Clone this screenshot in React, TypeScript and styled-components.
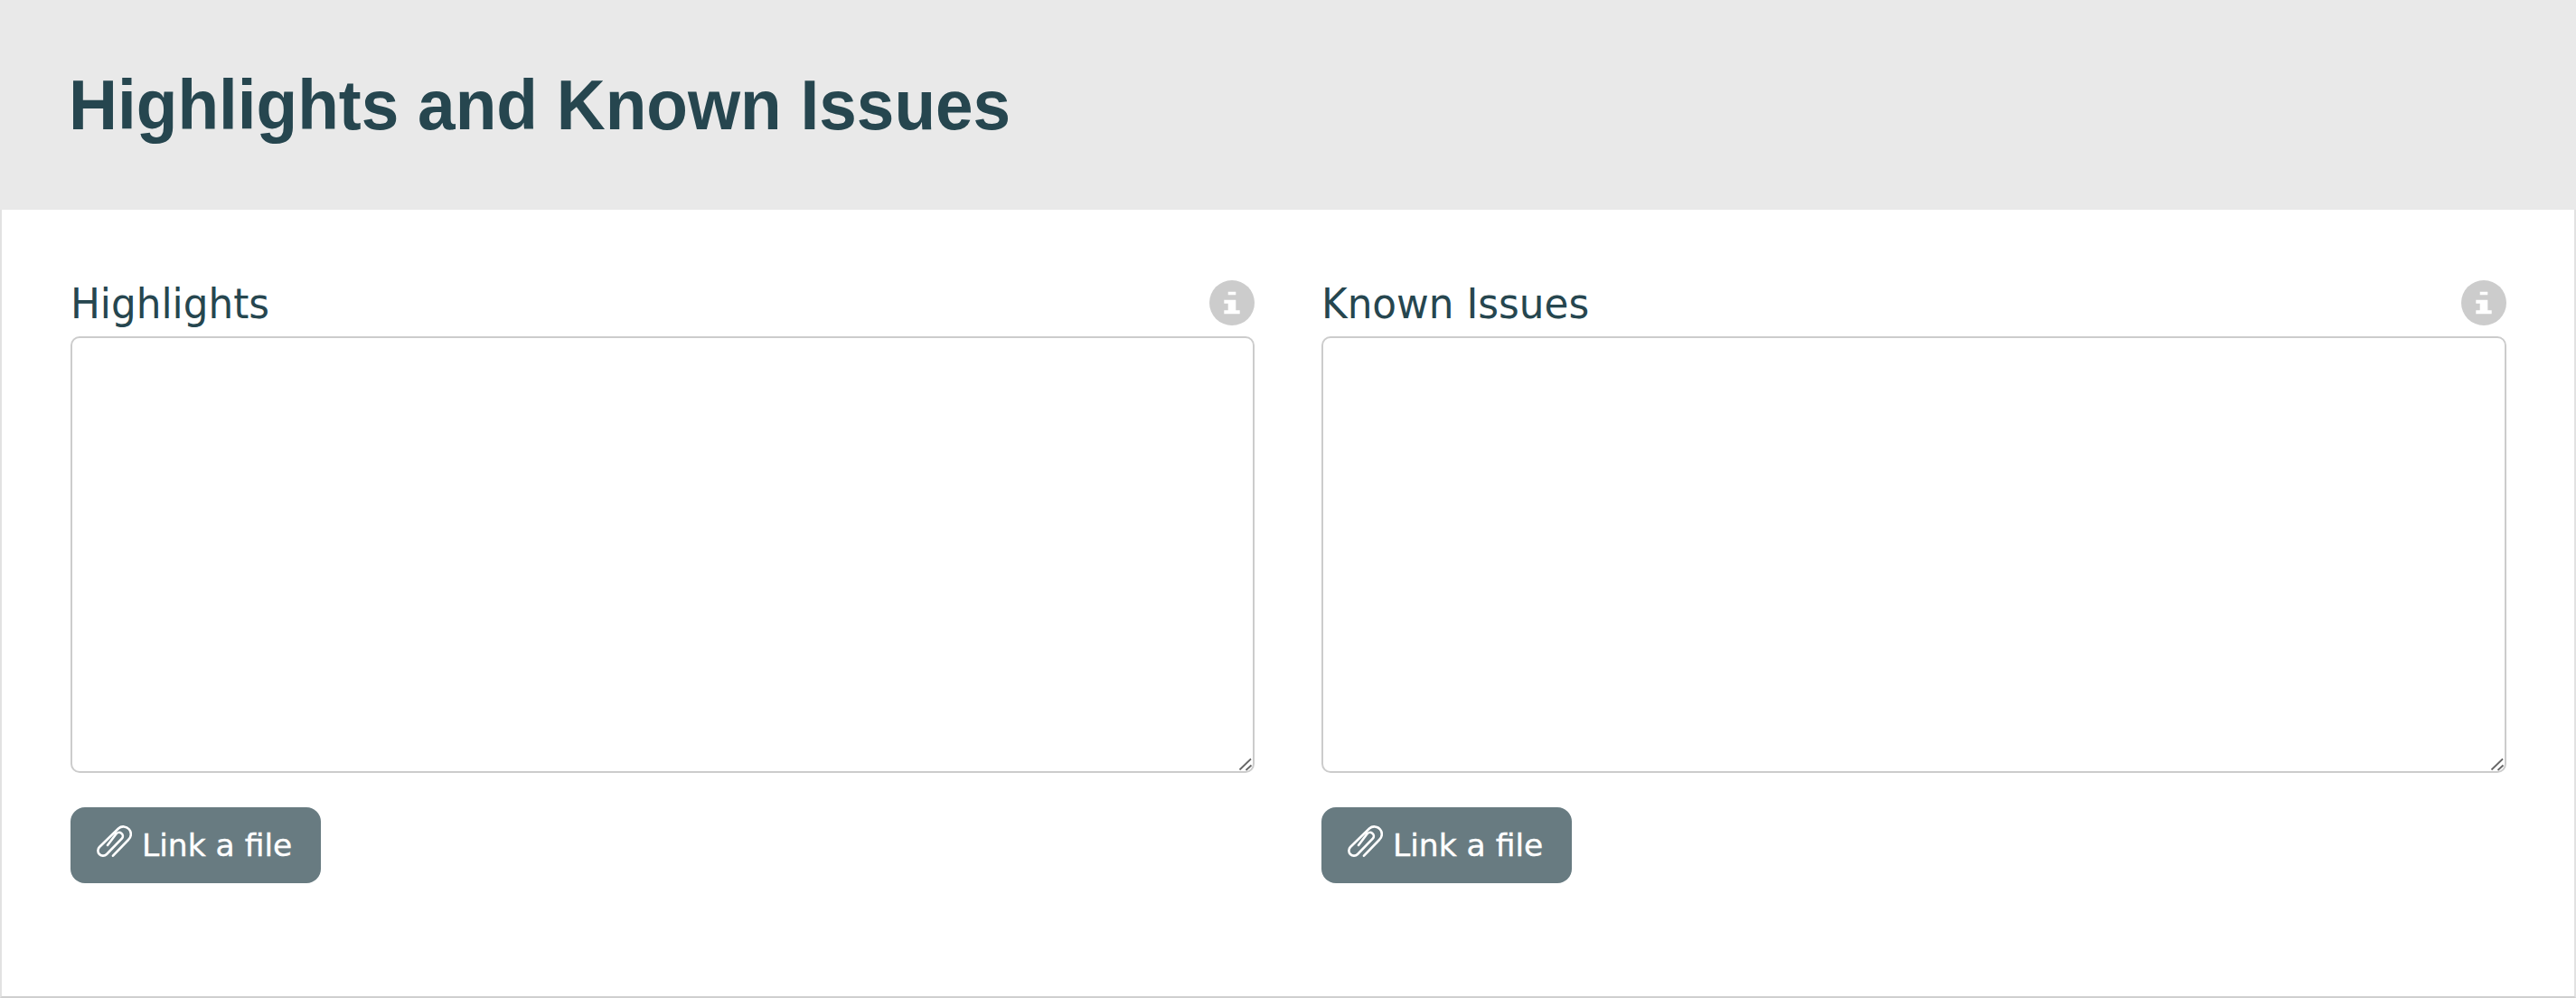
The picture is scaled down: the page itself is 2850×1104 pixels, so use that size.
import styled, { createGlobalStyle } from "styled-components";

const GlobalStyle = createGlobalStyle`
  html, body {
    margin: 0;
    padding: 0;
    background: #fff;
  }
`;

const Page = styled.div`
  width: 2850px;
  height: 1104px;
  display: flex;
  flex-direction: column;
`;

const Header = styled.header`
  height: 232px;
  flex: none;
  background: #e9e9e9;
  display: flex;
  align-items: center;
  padding-left: 76px;
`;

const Title = styled.h1`
  margin: 0;
  font: bold 78.5px/1 "Liberation Sans", Arial, sans-serif;
  color: #26464f;
  transform: scaleX(0.952);
  transform-origin: left center;
`;

const Panel = styled.main`
  flex: 1;
  box-sizing: border-box;
  border: 2px solid #e2e2e2;
  border-top: none;
  border-bottom-color: #cfcfcf;
  padding: 78px 76px 0;
  display: grid;
  grid-template-columns: 1310px 1311px;
  column-gap: 74px;
  align-content: start;
`;

const Field = styled.section`
  display: flex;
  flex-direction: column;
`;

const LabelRow = styled.div`
  display: flex;
  align-items: flex-start;
  justify-content: space-between;
  height: 62px;
`;

const Label = styled.label`
  margin-top: 3px;
  font: 46px/1 "DejaVu Sans", sans-serif;
  color: #26464f;
  transform: scaleX(0.95);
  transform-origin: left center;
`;

const InfoBadge = styled.svg`
  width: 50px;
  height: 50px;
  display: block;
`;

const BoxWrap = styled.div`
  position: relative;
  height: 483px;
`;

const TextArea = styled.textarea`
  box-sizing: border-box;
  display: block;
  width: 100%;
  height: 100%;
  border: 2px solid #cccccc;
  border-radius: 10px;
  background: #fff;
  outline: none;
  resize: none;
  margin: 0;
`;

const Grip = styled.svg`
  position: absolute;
  right: 2px;
  bottom: 2px;
  width: 16px;
  height: 16px;
  pointer-events: none;
`;

const LinkButton = styled.button`
  box-sizing: border-box;
  margin-top: 38px;
  align-self: flex-start;
  width: 277px;
  height: 84px;
  border: none;
  border-radius: 16px;
  background: #687b81;
  color: #fff;
  display: flex;
  align-items: center;
  gap: 11px;
  padding: 0 0 0 26px;
  font: 34.5px/1 "DejaVu Sans", sans-serif;
  -webkit-text-stroke: 0.4px #fff;
`;

const ClipIcon = styled.svg`
  width: 42px;
  height: 42px;
  margin-top: -10px;
  flex: none;
`;

const InfoIcon = () => (
  <InfoBadge viewBox="0 0 50 50">
    <circle cx="25" cy="25" r="25" fill="#cccccc" />
    <path
      fill="#fff"
      d="M20.7 12.7h8.6v3.6h-8.6zM16.3 21.7h13v11.6h4.4v4H16.3v-4h4.4v-7.6h-4.4z"
    />
  </InfoBadge>
);

const Paperclip = () => (
  <ClipIcon viewBox="4 4 42 42" fill="none" stroke="#fff" strokeWidth="2.6" strokeLinecap="round">
    <path d="M25 41.7 42 24A8.2 8.2 0 0 0 31 11.5L10 32A5.6 5.6 0 0 0 18 40L35 22.5A4 4 0 0 0 28.5 17.5L19 30" />
  </ClipIcon>
);

const fields = ["Highlights", "Known Issues"];

export default function App() {
  return (
    <Page>
      <GlobalStyle />
      <Header>
        <Title>Highlights and Known Issues</Title>
      </Header>
      <Panel>
        {fields.map((name) => (
          <Field key={name}>
            <LabelRow>
              <Label>{name}</Label>
              <InfoIcon />
            </LabelRow>
            <BoxWrap>
              <TextArea />
              <Grip viewBox="0 0 16 16" stroke="#666" strokeWidth="1.8">
                <path d="M1.5 14.5 14 2.5M8.5 15 14.5 9.5" />
              </Grip>
            </BoxWrap>
            <LinkButton>
              <Paperclip />
              Link a file
            </LinkButton>
          </Field>
        ))}
      </Panel>
    </Page>
  );
}
